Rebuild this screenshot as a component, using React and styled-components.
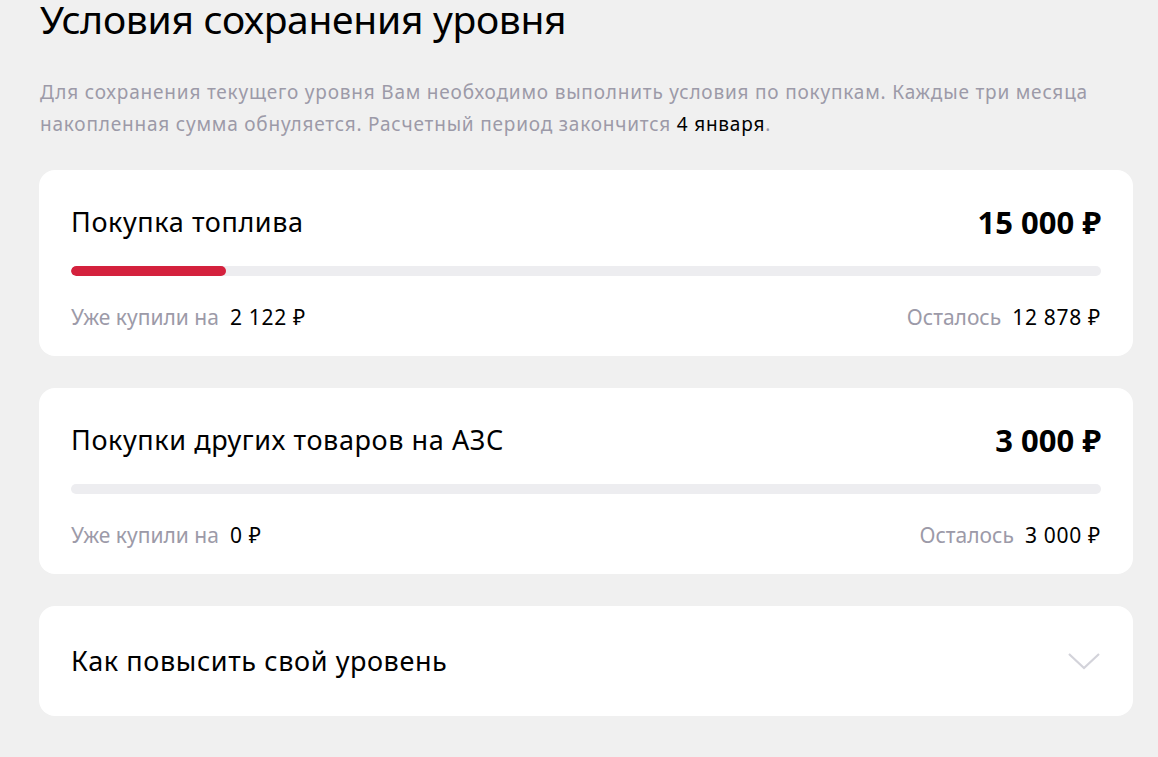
import React from "react";
import styled, { createGlobalStyle } from "styled-components";

const GlobalStyle = createGlobalStyle`
  html, body {
    margin: 0;
    padding: 0;
    background: #f0f0f0;
  }
  body {
    font-family: "Noto Sans", "Liberation Sans", sans-serif;
    color: #000;
  }
`;

const Page = styled.div`
  padding: 0 25px 40px 39px;
  display: flex;
  flex-direction: column;
`;

const Title = styled.h1`
  margin: 0;
  font-size: 39px;
  line-height: 38px;
  font-weight: 400;
  letter-spacing: -0.3px;
  padding-left: 1px;
`;

const Description = styled.p`
  margin: 38px 0 0;
  padding-left: 1px;
  font-size: 19px;
  line-height: 32px;
  letter-spacing: 0.8px;
  color: #9c9aa8;
`;

const Strong = styled.span`
  color: #000;
`;

const Cards = styled.div`
  margin-top: 30px;
  display: flex;
  flex-direction: column;
  gap: 32px;
`;

const Card = styled.section`
  background: #fff;
  border-radius: 16px;
  padding: ${(p) => (p.$compact ? "35px 32px" : "32px 32px 24px")};
  display: flex;
  flex-direction: column;
`;

const Header = styled.div`
  display: flex;
  align-items: center;
  justify-content: space-between;
  height: 40px;
`;

const CardTitle = styled.h2`
  margin: 0;
  font-size: 27px;
  font-weight: 400;
  letter-spacing: 0.6px;
  line-height: 40px;
`;

const Amount = styled.div`
  font-size: 31px;
  font-weight: 700;
  line-height: 40px;
`;

const Track = styled.div`
  margin-top: 24px;
  height: 10px;
  border-radius: 5px;
  background: #ededf0;
  overflow: hidden;
`;

const Fill = styled.div`
  height: 100%;
  background: #d4213d;
  border-radius: 5px;
`;

const Footer = styled.div`
  margin-top: 26px;
  display: flex;
  justify-content: space-between;
  align-items: center;
  line-height: 30px;
  font-size: 21px;
`;

const Stat = styled.div`
  display: flex;
  align-items: baseline;
  gap: 11px;
`;

const Label = styled.span`
  color: #9c9aa8;
`;

const Value = styled.span`
  color: #000;
  letter-spacing: 0.7px;
`;

const Chevron = styled.svg`
  width: 34px;
  height: 20px;
  flex-shrink: 0;
`;

const fmt = (n) => n.toLocaleString("ru-RU").replace(/\s/g, " ");

function Condition({ title, total, bought }) {
  const pct = Math.min(100, (bought / total) * 100);
  return (
    <Card>
      <Header>
        <CardTitle>{title}</CardTitle>
        <Amount>{fmt(total)} ₽</Amount>
      </Header>
      <Track>{pct > 0 && <Fill style={{ width: `${Math.max(pct, 15)}%` }} />}</Track>
      <Footer>
        <Stat>
          <Label>Уже купили на</Label>
          <Value>{fmt(bought)} ₽</Value>
        </Stat>
        <Stat>
          <Label>Осталось</Label>
          <Value>{fmt(total - bought)} ₽</Value>
        </Stat>
      </Footer>
    </Card>
  );
}

export default function App() {
  return (
    <>
      <GlobalStyle />
      <Page>
        <Title>Условия сохранения уровня</Title>
        <Description>
          Для сохранения текущего уровня Вам необходимо выполнить условия по покупкам. Каждые три месяца
          <br />
          накопленная сумма обнуляется. Расчетный период закончится <Strong>4 января</Strong>.
        </Description>
        <Cards>
          <Condition title="Покупка топлива" total={15000} bought={2122} />
          <Condition title="Покупки других товаров на АЗС" total={3000} bought={0} />
          <Card $compact>
            <Header>
              <CardTitle>Как повысить свой уровень</CardTitle>
              <Chevron viewBox="0 0 34 20" fill="none">
                <path d="M2 3 L17 17 L32 3" stroke="#d3d3da" strokeWidth="2.2" />
              </Chevron>
            </Header>
          </Card>
        </Cards>
      </Page>
    </>
  );
}
